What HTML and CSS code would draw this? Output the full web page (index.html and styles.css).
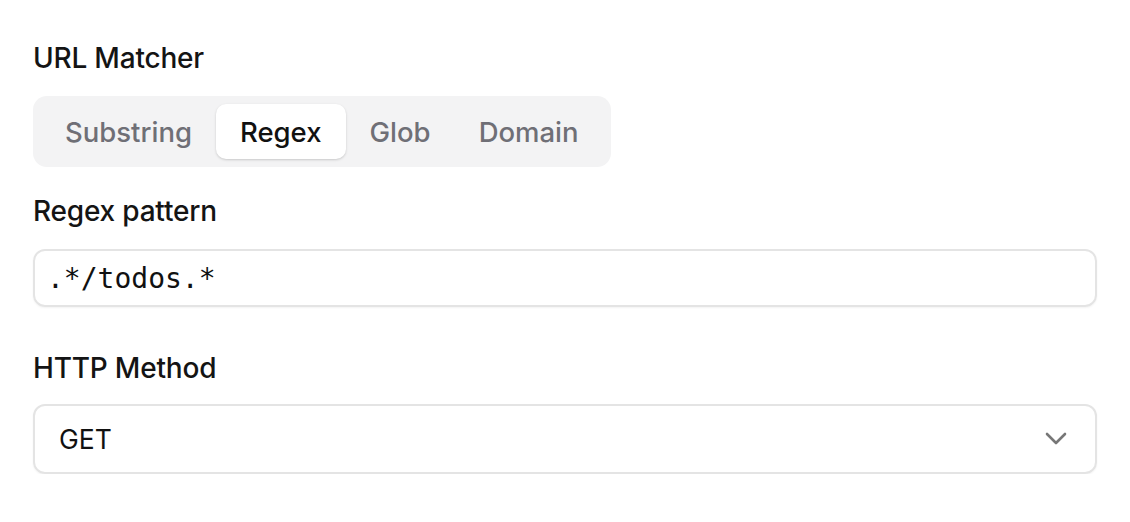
FILE: index.html
```html
<!DOCTYPE html>
<html>
<head>
<meta charset="utf-8">
<link rel="stylesheet" href="styles.css">
</head>
<body>
<div class="form">
  <div class="field">
    <div class="label">URL Matcher</div>
    <div class="segmented">
      <div class="seg">Substring</div>
      <div class="seg active">Regex</div>
      <div class="seg">Glob</div>
      <div class="seg">Domain</div>
    </div>
  </div>
  <div class="field">
    <div class="label">Regex pattern</div>
    <div class="input">.*/todos.*</div>
  </div>
  <div class="field">
    <div class="label">HTTP Method</div>
    <div class="select">
      <span class="select-value">GET</span>
      <svg class="chevron" width="22" height="14" viewBox="0 0 22 14"><path d="M2 2 L11 11 L20 2" fill="none" stroke="#777" stroke-width="2.6" stroke-linecap="round" stroke-linejoin="round"/></svg>
    </div>
  </div>
</div>
</body>
</html>
```

FILE: styles.css
```css
html, body {
  margin: 0;
  padding: 0;
  background: #ffffff;
}
body {
  font-family: "Inter", "Noto Sans", sans-serif;
  color: #141414;
}
.form {
  padding: 40px 33px 0 33px;
  display: flex;
  flex-direction: column;
  width: 1064px;
}
.field {
  display: flex;
  flex-direction: column;
}
.label {
  font-size: 28px;
  font-weight: 500;
  line-height: 36px;
  letter-spacing: -0.2px;
}
.segmented {
  margin-top: 20px;
  align-self: flex-start;
  display: flex;
  padding: 8px;
  background: #f3f3f4;
  border-radius: 14px;
}
.seg {
  height: 55px;
  display: flex;
  align-items: center;
  padding: 0 24px;
  font-size: 27.5px;
  font-weight: 500;
  color: #6f6f76;
  border-radius: 10px;
}
.seg.active {
  background: #ffffff;
  color: #111111;
  box-shadow: 0 1px 3px rgba(0,0,0,0.12), 0 1px 2px rgba(0,0,0,0.06);
}
.field + .field {
  margin-top: 26px;
}
.input {
  margin-top: 20px;
  height: 54px;
  border: 2px solid #e4e4e4;
  border-radius: 12px;
  box-shadow: 0 1px 2px rgba(0,0,0,0.05);
  display: flex;
  align-items: center;
  padding: 0 12px;
  font-family: "DejaVu Sans Mono", "Liberation Mono", monospace;
  font-size: 28px;
  color: #111;
}
.field:nth-child(3) {
  margin-top: 43px;
}
.select {
  margin-top: 18px;
  height: 66px;
  border: 2px solid #e4e4e4;
  border-radius: 12px;
  box-shadow: 0 1px 2px rgba(0,0,0,0.05);
  display: flex;
  align-items: center;
  justify-content: space-between;
  padding: 0 28px 0 24px;
  font-size: 26.5px;
  color: #111;
}
.chevron {
  display: block;
}
```
